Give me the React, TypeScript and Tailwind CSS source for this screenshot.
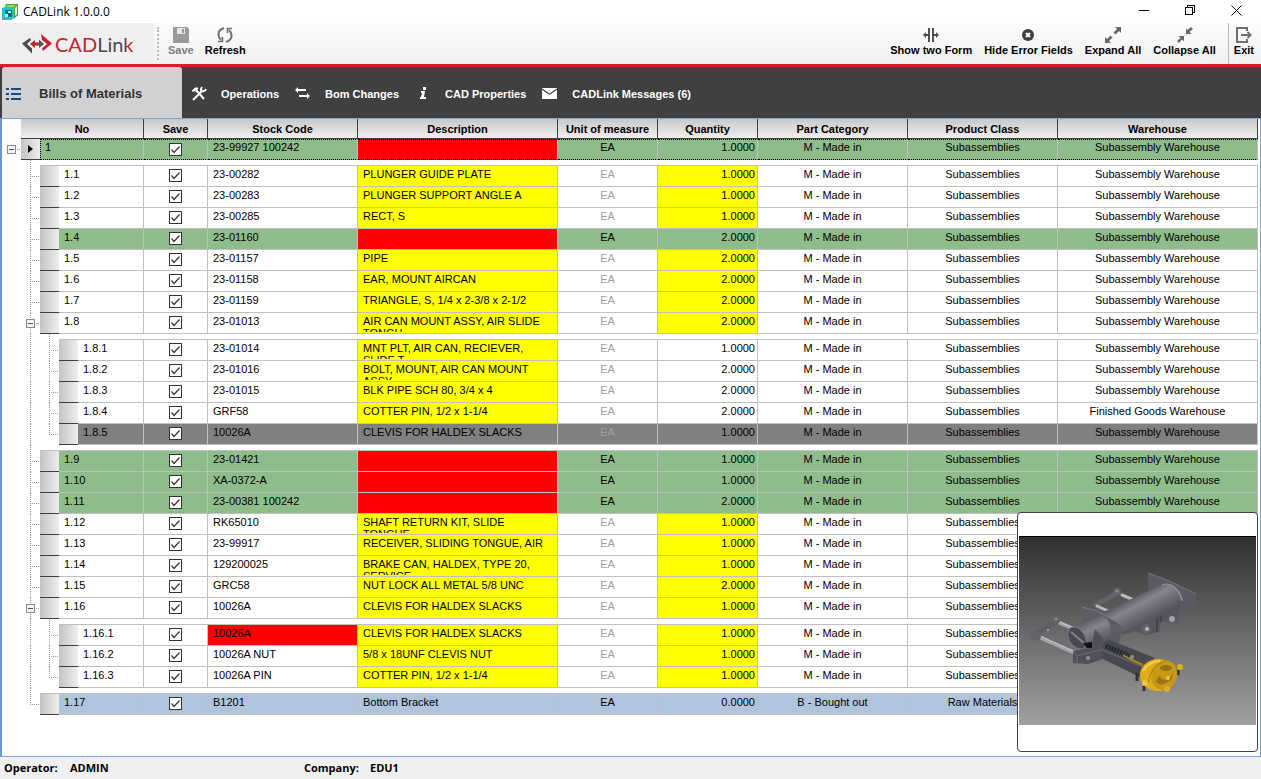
import type { ReactNode } from 'react';

type Tone = 'normal' | 'missing' | 'excluded' | 'bought';

interface BomRow {
  no: string;
  stock: string;
  desc?: string;
  qty: string;
  tone?: Tone;
  plainQty?: boolean;
  stockError?: boolean;
  warehouse?: string;
  open?: boolean;
}

const rows: BomRow[] = [
  { no: '1', stock: '23-99927 100242', qty: '1.0000', tone: 'missing', open: true },
  { no: '1.1', stock: '23-00282', desc: 'PLUNGER GUIDE PLATE', qty: '1.0000' },
  { no: '1.2', stock: '23-00283', desc: 'PLUNGER SUPPORT ANGLE A', qty: '1.0000' },
  { no: '1.3', stock: '23-00285', desc: 'RECT, S', qty: '1.0000' },
  { no: '1.4', stock: '23-01160', qty: '2.0000', tone: 'missing' },
  { no: '1.5', stock: '23-01157', desc: 'PIPE', qty: '2.0000' },
  { no: '1.6', stock: '23-01158', desc: 'EAR, MOUNT AIRCAN', qty: '2.0000' },
  { no: '1.7', stock: '23-01159', desc: 'TRIANGLE, S, 1/4 x 2-3/8 x 2-1/2', qty: '2.0000' },
  { no: '1.8', stock: '23-01013', desc: 'AIR CAN MOUNT ASSY, AIR SLIDE TONGU', qty: '2.0000', open: true },
  { no: '1.8.1', stock: '23-01014', desc: 'MNT PLT, AIR CAN, RECIEVER, SLIDE T', qty: '1.0000', plainQty: true },
  { no: '1.8.2', stock: '23-01016', desc: 'BOLT, MOUNT, AIR CAN MOUNT ASSY', qty: '2.0000', plainQty: true },
  { no: '1.8.3', stock: '23-01015', desc: 'BLK PIPE SCH 80, 3/4 x 4', qty: '2.0000', plainQty: true },
  { no: '1.8.4', stock: 'GRF58', desc: 'COTTER PIN, 1/2 x 1-1/4', qty: '2.0000', plainQty: true, warehouse: 'Finished Goods Warehouse' },
  { no: '1.8.5', stock: '10026A', desc: 'CLEVIS FOR HALDEX SLACKS', qty: '1.0000', tone: 'excluded' },
  { no: '1.9', stock: '23-01421', qty: '1.0000', tone: 'missing' },
  { no: '1.10', stock: 'XA-0372-A', qty: '1.0000', tone: 'missing' },
  { no: '1.11', stock: '23-00381 100242', qty: '2.0000', tone: 'missing' },
  { no: '1.12', stock: 'RK65010', desc: 'SHAFT RETURN KIT, SLIDE TONGUE', qty: '1.0000' },
  { no: '1.13', stock: '23-99917', desc: 'RECEIVER, SLIDING TONGUE, AIR', qty: '1.0000' },
  { no: '1.14', stock: '129200025', desc: 'BRAKE CAN, HALDEX, TYPE 20, SERVICE', qty: '1.0000' },
  { no: '1.15', stock: 'GRC58', desc: 'NUT LOCK ALL METAL 5/8 UNC', qty: '2.0000' },
  { no: '1.16', stock: '10026A', desc: 'CLEVIS FOR HALDEX SLACKS', qty: '1.0000', open: true },
  { no: '1.16.1', stock: '10026A', desc: 'CLEVIS FOR HALDEX SLACKS', qty: '1.0000', stockError: true },
  { no: '1.16.2', stock: '10026A NUT', desc: '5/8 x 18UNF CLEVIS NUT', qty: '1.0000' },
  { no: '1.16.3', stock: '10026A PIN', desc: 'COTTER PIN, 1/2 x 1-1/4', qty: '1.0000' },
  { no: '1.17', stock: 'B1201', desc: 'Bottom Bracket', qty: '0.0000', tone: 'bought' },
];

const columns = [
  { title: 'Save', width: 'w-16' },
  { title: 'Stock Code', width: 'w-[150px]' },
  { title: 'Description', width: 'w-[200px]' },
  { title: 'Unit of measure', width: 'w-[100px]' },
  { title: 'Quantity', width: 'w-[100px]' },
  { title: 'Part Category', width: 'w-[150px]' },
  { title: 'Product Class', width: 'w-[150px]' },
  { title: 'Warehouse', width: '' },
];

const toneBg: Record<Tone, string> = {
  normal: 'bg-white',
  missing: 'bg-[#8fbc8b]',
  excluded: 'bg-[#808080]',
  bought: 'bg-[#b0c4de]',
};

const levelOf = (no: string) => no.split('.').length - 1;

// One 19px step of the tree gutter: vertical line, elbow to the row, expand box.
function Guide({ up, down, elbow, open }: { up?: boolean; down?: boolean; elbow?: boolean; open?: boolean }) {
  return (
    <svg width="19" height="21" viewBox="0 0 19 21" className="shrink-0" shapeRendering="crispEdges" aria-hidden="true">
      <g stroke="#999" strokeDasharray="1 1" fill="none">
        {up && <path d="M9.5 0V10" />}
        {down && <path d="M9.5 10V21" />}
        {elbow && <path d="M9 10.5H19" />}
      </g>
      {open && (
        <g>
          <rect x="5.5" y="6.5" width="8" height="8" rx="1" fill="#f4f4f4" stroke="#8a8a8a" />
          <path d="M7 10.5h5" stroke="#3c5a9c" />
        </g>
      )}
    </svg>
  );
}

function GapRow({ level }: { level: number }) {
  return (
    <tr className="h-[6px]" aria-hidden="true">
      <td className="p-0">
        <div className="flex h-[6px]">
          <span className="w-[19px]" />
          {[1, 2].slice(0, level).map((step) => (
            <svg key={step} width="19" height="6" shapeRendering="crispEdges">
              <path d="M9.5 0V6" stroke="#999" strokeDasharray="1 1" />
            </svg>
          ))}
          <span className="flex-1 border-b border-[#c0c0c0]" />
        </div>
      </td>
      {columns.map((c) => (
        <td key={c.title} className="border-b border-[#c0c0c0] p-0" />
      ))}
    </tr>
  );
}

function DataRow({ row, last }: { row: BomRow; last: boolean }) {
  const level = levelOf(row.no);
  const tone = row.tone ?? 'normal';
  const bg = toneBg[tone];
  const root = level === 0;
  // the focused root row has a dotted outline
  const line = root
    ? 'border-y border-r border-y-black border-r-[#c0c0c0] [border-block-style:dotted]'
    : 'border-b border-r border-[#c0c0c0]';
  const top = root ? 'pt-px' : 'pt-[2px]';
  const cell = `h-[21px] p-0 align-top ${line}`;
  const text = `h-[19px] overflow-hidden px-[5px] ${top}`;
  const descBg = tone === 'missing' ? 'bg-[#ff0000]' : tone === 'normal' ? 'bg-[#ffff00]' : bg;
  const qtyBg = tone === 'normal' && !row.plainQty ? 'bg-[#ffff00]' : bg;
  const muted = tone === 'normal' || tone === 'excluded';

  return (
    <tr>
      <td className="h-[21px] p-0">
        <div className="flex h-[21px]">
          {root ? (
            <Guide elbow open />
          ) : (
            <>
              <span className="w-[19px] shrink-0" />
              {level === 2 && <Guide up down />}
              <Guide up down={!last} elbow open={row.open} />
            </>
          )}
          <span className="flex w-[19px] shrink-0 items-center justify-center border-b border-b-[#404040] bg-linear-to-r from-[#c4c4c4] to-[#eeeeee]">
            {root && <span className="border-y-4 border-l-[5px] border-y-transparent border-l-black" />}
          </span>
          <span className={`flex-1 ${top} ${line} ${bg} ${root ? 'border-l border-l-black pl-1 [border-left-style:dotted]' : 'pl-[5px]'}`}>
            {row.no}
          </span>
        </div>
      </td>
      <td className={`${cell} ${bg}`}>
        <label className="grid h-[19px] place-items-center">
          <input
            type="checkbox"
            defaultChecked
            aria-label={`Save ${row.no}`}
            className="col-start-1 row-start-1 size-[13px] appearance-none border border-[#333] bg-white"
          />
          <svg width="13" height="13" className="pointer-events-none col-start-1 row-start-1" aria-hidden="true">
            <path d="M2.5 6.5 5 9.5 10.5 3.5" fill="none" stroke="#333" strokeWidth="1.2" />
          </svg>
        </label>
      </td>
      <td className={`${cell} ${row.stockError ? 'bg-[#ff0000]' : bg}`}>
        <div className={text}>{row.stock}</div>
      </td>
      <td className={`${cell} ${descBg}`}>
        <div className={text}>{row.desc}</div>
      </td>
      <td className={`${cell} ${bg} text-center ${muted ? 'text-[#a0a0a0]' : ''}`}>
        <div className={text}>EA</div>
      </td>
      <td className={`${cell} ${qtyBg} text-right`}>
        <div className={`h-[19px] pr-[2px] ${top}`}>{row.qty}</div>
      </td>
      <td className={`${cell} ${bg} text-center`}>
        <div className={text}>{tone === 'bought' ? 'B - Bought out' : 'M - Made in'}</div>
      </td>
      <td className={`${cell} ${bg} text-center`}>
        <div className={text}>{tone === 'bought' ? 'Raw Materials' : 'Subassemblies'}</div>
      </td>
      <td className={`${cell} ${bg} text-center`}>
        <div className={text}>{row.warehouse ?? 'Subassembly Warehouse'}</div>
      </td>
    </tr>
  );
}

function BomTable() {
  const body: ReactNode[] = [];
  rows.forEach((row, i) => {
    const level = levelOf(row.no);
    const next = rows[i + 1];
    const nextLevel = next ? levelOf(next.no) : 0;
    body.push(<DataRow key={row.no} row={row} last={level > nextLevel || !next} />);
    if (next && nextLevel !== level) {
      body.push(<GapRow key={`${row.no}-gap`} level={nextLevel} />);
    }
  });

  return (
    <table className="w-full table-fixed border-separate border-spacing-0 text-[11px] leading-3 text-black">
      <thead>
        <tr>
          <th className="w-[142px] p-0">
            <div className="flex h-5">
              <span className="w-[19px]" />
              <span className="flex-1 border-b border-r border-[#404040] bg-linear-to-b from-[#c8c8c8] to-[#f0f0f0] pt-1">No</span>
            </div>
          </th>
          {columns.map((c) => (
            <th
              key={c.title}
              className={`h-5 border-b border-r border-[#404040] bg-linear-to-b from-[#c8c8c8] to-[#f0f0f0] p-0 ${c.width}`}
            >
              {c.title}
            </th>
          ))}
        </tr>
      </thead>
      <tbody>{body}</tbody>
    </table>
  );
}

function ToolButton({ label, icon, disabled }: { label: string; icon: ReactNode; disabled?: boolean }) {
  return (
    <button
      type="button"
      disabled={disabled}
      className={`flex flex-col items-center text-[11px] font-bold leading-3 ${disabled ? 'text-[#808080]' : 'text-black'}`}
    >
      <span className="flex h-[18px] items-center">{icon}</span>
      {label}
    </button>
  );
}

function AssemblyPreview() {
  return (
    <figure className="absolute bottom-1 right-[2px] flex h-60 w-[241px] flex-col justify-center rounded-sm border border-[#404040] bg-white px-px pb-[3px]">
      <svg viewBox="0 0 237 188" className="w-full border-t border-black" role="img" aria-label="Assembly preview">
        <defs>
          <linearGradient id="backdrop" x1="0" y1="0" x2="0" y2="1">
            <stop offset="0" stopColor="#303030" />
            <stop offset="1" stopColor="#a0a0a0" />
          </linearGradient>
          <linearGradient id="tube" gradientUnits="userSpaceOnUse" x1="108" y1="62" x2="124" y2="92">
            <stop offset="0" stopColor="#55555d" />
            <stop offset="0.3" stopColor="#85858e" />
            <stop offset="0.6" stopColor="#6a6a73" />
            <stop offset="1" stopColor="#4b4b53" />
          </linearGradient>
          <linearGradient id="sleeve" gradientUnits="userSpaceOnUse" x1="66" y1="84" x2="78" y2="110">
            <stop offset="0" stopColor="#5c5c65" />
            <stop offset="0.35" stopColor="#84848d" />
            <stop offset="1" stopColor="#50505a" />
          </linearGradient>
        </defs>
        <rect width="237" height="188" fill="url(#backdrop)" />
        {/* frame links and rods */}
        <g strokeLinecap="round" fill="none">
          <path d="M77 68 98 56" stroke="#63636c" strokeWidth="5" />
          <path d="M103 58 115 63M78 69 89 74" stroke="#b9b9bf" strokeWidth="3" />
          <path d="M18 97 37 84" stroke="#5d5d66" strokeWidth="5" />
          <path d="M41 86 55 92M20 100 56 116" stroke="#a4a4ac" strokeWidth="4" />
          <path d="M41 85 54 91M21 99 54 114" stroke="#c4c4ca" />
        </g>
        <g fill="#62626b">
          <circle cx="98" cy="55" r="4" />
          <circle cx="37" cy="83" r="4" />
          <circle cx="17" cy="99" r="5" />
        </g>
        <circle cx="98" cy="54" r="1.5" fill="#8b8b94" />
        <circle cx="37" cy="82" r="1.5" fill="#8b8b94" />
        <circle cx="29" cy="93" r="1.2" fill="#9a9aa2" />
        {/* end plate */}
        <path d="M129 36 148 43 161 49 177 57V71L173 74 165 72 158 87 150 74 129 52Z" fill="#5a5a63" />
        <path d="M129 36 148 43 161 49 177 57" fill="none" stroke="#74747d" />
        {/* lower brackets */}
        <path d="M101 88 160 64 158 86 142 84 140 95 127 98 116 94 103 98Z" fill="#55555e" />
        <path d="M138 80V95M142 78V85" stroke="#3f3f47" strokeWidth="1.5" />
        <circle cx="127" cy="92" r="5" fill="#62626b" />
        <circle cx="128" cy="92" r="2" fill="#b4b4ba" />
        <circle cx="153" cy="82" r="3" fill="#a0a0a8" />
        {/* main tube */}
        <path d="M80 77 142 48C152 44 162 53 163 63C163 69 160 71 156 73L102 97Z" fill="url(#tube)" />
        <path d="M143 48C153 45 162 54 163 64" fill="none" stroke="#8b8b94" strokeWidth="1.5" />
        {/* mid plate */}
        <path d="M63 70 78 74 103 88 101 104 92 111 82 96 63 86Z" fill="#5c5c65" />
        <path d="M63 70 78 74 103 88" fill="none" stroke="#7a7a84" />
        {/* sleeve */}
        <path d="M50 92 82 79C91 80 94 93 89 103L64 113 52 106Z" fill="url(#sleeve)" />
        <ellipse cx="58" cy="101" rx="8" ry="12" fill="#484851" stroke="#777780" transform="rotate(-32 58 101)" />
        <path d="M52 95 66 107" stroke="#85858e" strokeWidth="2" />
        {/* flange */}
        <path d="M54 114 72 111 76 92 84 101V122L69 127 54 126Z" fill="#50505a" />
        <path d="M54 114 58 119 84 112M58 119V127" fill="none" stroke="#6d6d77" />
        <path d="M64 106 73 105V111L68 111Z" fill="#111" />
        <circle cx="69" cy="121" r="2" fill="#8f8f98" />
        {/* arm */}
        <path d="M84 105 91 103 136 121 123 141 84 122Z" fill="#484851" />
        <path d="M84 113 124 130" stroke="#62626c" strokeWidth="1.5" />
        <path d="M87 109 110 119" stroke="#23272e" strokeWidth="5" strokeDasharray="2 1" />
        <path d="M104 118 111 122M111 122 124 128" stroke="#a88414" strokeWidth="2" />
        <circle cx="113" cy="120" r="2" fill="#8e8e97" />
        {/* brake canister */}
        <path d="M118 136V144M125 149V154M159 133V138" stroke="#34342c" strokeWidth="3" />
        <ellipse cx="139" cy="138" rx="18" ry="16" fill="#dfae1c" />
        <ellipse cx="145" cy="138" rx="13" ry="15" fill="#c89917" transform="rotate(20 145 138)" />
        <path d="M129 146Q131 129 147 124" stroke="#a77d10" fill="none" />
        <path d="M124 134Q130 124 141 124" stroke="#f3cf48" strokeWidth="2" fill="none" />
        <path d="M137 145Q143 151 153 142L154 136Q148 148 140 139Z" fill="#9b7513" />
        <ellipse cx="147" cy="131" rx="6" ry="3" fill="#977212" />
        <circle cx="149" cy="141" r="2" fill="#f0ca42" />
        <circle cx="161" cy="130" r="3" fill="#dcae20" />
        <circle cx="148" cy="152" r="3" fill="#dcae20" />
        <circle cx="126" cy="146" r="3" fill="#f0c334" />
      </svg>
    </figure>
  );
}

const navItems = [
  {
    label: 'Operations',
    icon: (
      <svg width="16" height="16" viewBox="0 0 16 16" fill="none" stroke="currentColor">
        <path d="M5 4 13 13" strokeWidth="2" />
        <path d="M1 5 4 2H7L5 5Z" fill="currentColor" />
        <path d="M2 14 11 5" strokeWidth="2" />
        <path d="M11 1Q9 4 11 5Q14 6 15 3" strokeWidth="2" />
      </svg>
    ),
  },
  {
    label: 'Bom Changes',
    icon: (
      <svg width="16" height="16" viewBox="0 0 16 16" fill="currentColor">
        <path d="M0 4 3 1V3H11V5H3V7ZM15 10 12 7V9H4V11H12V13Z" />
      </svg>
    ),
  },
  {
    label: 'CAD Properties',
    icon: (
      <svg width="16" height="16" viewBox="0 0 16 16" fill="currentColor">
        <path d="M8 1H11V4H8ZM6 5H10L9 11H11V13H5V11H6L7 7H6Z" />
      </svg>
    ),
  },
  {
    label: 'CADLink Messages (6)',
    icon: (
      <svg width="16" height="16" viewBox="0 0 16 16">
        <path d="M0 2H15V13H0Z" fill="currentColor" />
        <path d="M0 3 7 8H8L15 3" fill="none" stroke="#404040" strokeWidth="1.2" />
      </svg>
    ),
  },
];

export default function App() {
  return (
    <div className="flex min-h-screen flex-col bg-white font-['Liberation_Sans',Arial,sans-serif]">
      <header className="flex h-[23px] items-center bg-white pl-[2px] font-['Open_Sans',sans-serif] text-xs text-black">
        <svg width="16" height="17" viewBox="0 0 16 17" aria-hidden="true">
          <path d="M4 1H16V12L12 16V4H3Z" fill="#3aaa35" />
          <path d="M5 2H14L12 4H4Z" fill="#a5d63a" />
          <path d="M13 5 15 3V11L13 13Z" fill="#f2faf0" />
          <path d="M0 5 3 4H12V15L9 17H0Z" fill="#20c4cc" />
          <path d="M3 7H10V14H3Z" fill="#0c6c92" />
          <path d="M6 8H9V10H6ZM3 11H6V14H3Z" fill="#bfeef0" />
        </svg>
        <h1 className="ml-[5px]">CADLink 1.0.0.0</h1>
        <div className="mb-[2px] ml-auto mr-[2px] flex">
          <button type="button" aria-label="Minimize" className="flex h-5 w-[46px] items-center justify-center">
            <svg width="11" height="11" stroke="black" fill="none" shapeRendering="crispEdges"><path d="M0 5.5H10" /></svg>
          </button>
          <button type="button" aria-label="Restore" className="flex h-5 w-[46px] items-center justify-center">
            <svg width="11" height="11" stroke="black" fill="none" shapeRendering="crispEdges"><path d="M.5 2.5H7.5V9.5H.5ZM2.5 2V.5H9.5V7.5H8" /></svg>
          </button>
          <button type="button" aria-label="Close" className="flex h-5 w-[46px] items-center justify-center">
            <svg width="11" height="11" stroke="black" fill="none"><path d="M.5 .5 10.5 10.5M10.5 .5 .5 10.5" /></svg>
          </button>
        </div>
      </header>

      <div className="flex h-11 border-b-[3px] border-[#d71f27] bg-linear-to-b from-[#fcfcfc] to-[#f0f0f0]">
        <div className="flex w-[154px] items-center bg-[#efefef] pl-[22px]">
          <svg width="30" height="20" viewBox="0 0 30 20" aria-hidden="true">
            <path d="M0 9.5 8 4 9 6 5 10 10 14.5V19.5Z" fill="#4a4a4d" />
            <path d="M8 10 13 6V8.5H16V11.5H13V14Z" fill="#c8202c" />
            <path d="M15 8.5H17V5.5L22 10 17 14V11.5H15Z" fill="#55555a" />
            <path d="M19 0 30 9.5 21 17 20 14.5 25 10 20 6Z" fill="#c8202c" />
          </svg>
          <span className="ml-[3px] font-['Lato',sans-serif] text-xl leading-6 text-[#4a4a4d]">
            <span className="text-[#c8202c]">CAD</span>Lin<span className="bg-linear-to-r from-[#4a4a4d] from-30% to-[#c8202c] to-30% bg-clip-text text-transparent">k</span>
          </span>
        </div>
        <div className="my-1 ml-[3px] w-0 border-l-2 border-dotted border-[#b8b8b8]" />
        <div className="ml-[9px] flex gap-[11px] pt-[3px]">
          <ToolButton
            label="Save"
            disabled
            icon={
              <svg width="16" height="16" viewBox="0 0 16 16">
                <path d="M0 0H14L16 2V16H0Z" fill="#999" />
                <path d="M4 1H12V7H4Z" fill="#e8e8e8" />
                <path d="M9 2H11V6H9Z" fill="#999" />
              </svg>
            }
          />
          <ToolButton
            label="Refresh"
            icon={
              <svg width="16" height="16" viewBox="0 0 16 16" fill="none" stroke="#707070" strokeWidth="2">
                <path d="M7 1Q1 3 1.5 8Q2 11 4 13M9 15Q15 13 14.5 8Q14 5 12 3" />
                <path d="M1 14.5H5.5V10M15 1.5H10.5V6" strokeWidth="1.6" />
              </svg>
            }
          />
        </div>
        <div className="ml-auto flex gap-3 pr-[7px] pt-[3px]">
          <ToolButton
            label="Show two Form"
            icon={
              <svg width="16" height="14" viewBox="0 0 16 14" fill="#505050">
                <path d="M5 0H7V14H5ZM9 0H11V14H9ZM0 7 3 4V6H5V8H3V10ZM16 7 13 4V6H11V8H13V10Z" />
              </svg>
            }
          />
          <ToolButton
            label="Hide Error Fields"
            icon={
              <svg width="12" height="12" viewBox="0 0 12 12">
                <circle cx="6" cy="6" r="6" fill="#404040" />
                <path d="M4 4 8 8M8 4 4 8" stroke="white" strokeWidth="2" />
              </svg>
            }
          />
          <ToolButton
            label="Expand All"
            icon={
              <svg width="16" height="16" viewBox="0 0 16 16" fill="#686868">
                <path d="M10 0H16V6L14 4 10.500 7.500 8.500 5.500 12 2ZM0 10 2 12 5.500 8.500 7.500 10.500 4 14 6 16H0Z" />
              </svg>
            }
          />
          <ToolButton
            label="Collapse All"
            icon={
              <svg width="16" height="16" viewBox="0 0 16 16" fill="#686868">
                <path d="M9 1.500 10.500 3 14 0 16 2 12.500 5 14.500 7H9ZM1.500 9H7V14.500L5 12.500 2 16 0 14 3.500 11Z" />
              </svg>
            }
          />
          <div className="-mt-[3px] flex border-l border-[#b8b8b8] pl-[5px] pt-[3px]">
            <ToolButton
              label="Exit"
              icon={
                <svg width="16" height="16" viewBox="0 0 16 16" fill="none" stroke="#707070" strokeWidth="2">
                  <path d="M11 4V1H1V15H11V12" />
                  <path d="M5 8H14M11.500 5 14.500 8 11.500 11" />
                </svg>
              }
            />
          </div>
        </div>
      </div>

      <nav className="flex h-[51px] items-stretch bg-[#404040] pl-[2px] text-[11px] font-bold text-white">
        <a href="#bom" className="flex w-[180px] items-center rounded-t-[3px] bg-[#d1d1d3] pl-1 pt-[3px] text-[13px] text-[#333]">
          <svg width="15" height="12" viewBox="0 0 15 12" fill="#164a86" aria-hidden="true">
            <path d="M0 0H3V2H0ZM5 0H15V2H5ZM0 5H3V7H0ZM5 5H15V7H5ZM0 10H3V12H0ZM5 10H15V12H5Z" />
          </svg>
          <span className="ml-[18px]">Bills of Materials</span>
        </a>
        <div className="ml-[9px] flex items-center gap-4 pt-[3px]">
          {navItems.map((item) => (
            <a key={item.label} href="#" className="flex items-center gap-[14px]">
              {item.icon}
              {item.label}
            </a>
          ))}
        </div>
      </nav>

      <main className="relative flex-1 border border-l-2 border-[#7ba7e0] border-l-[#6f93cc] pr-[2px]">
        <BomTable />
        <AssemblyPreview />
      </main>

      <footer className="flex h-[22px] items-center bg-[#f0f0f0] px-1 font-['Open_Sans',sans-serif] text-[11px] font-bold text-black">
        <span className="w-[66px]">Operator:</span>
        <span className="w-[234px]">ADMIN</span>
        <span className="w-[66px]">Company:</span>
        <span>EDU1</span>
      </footer>
    </div>
  );
}
